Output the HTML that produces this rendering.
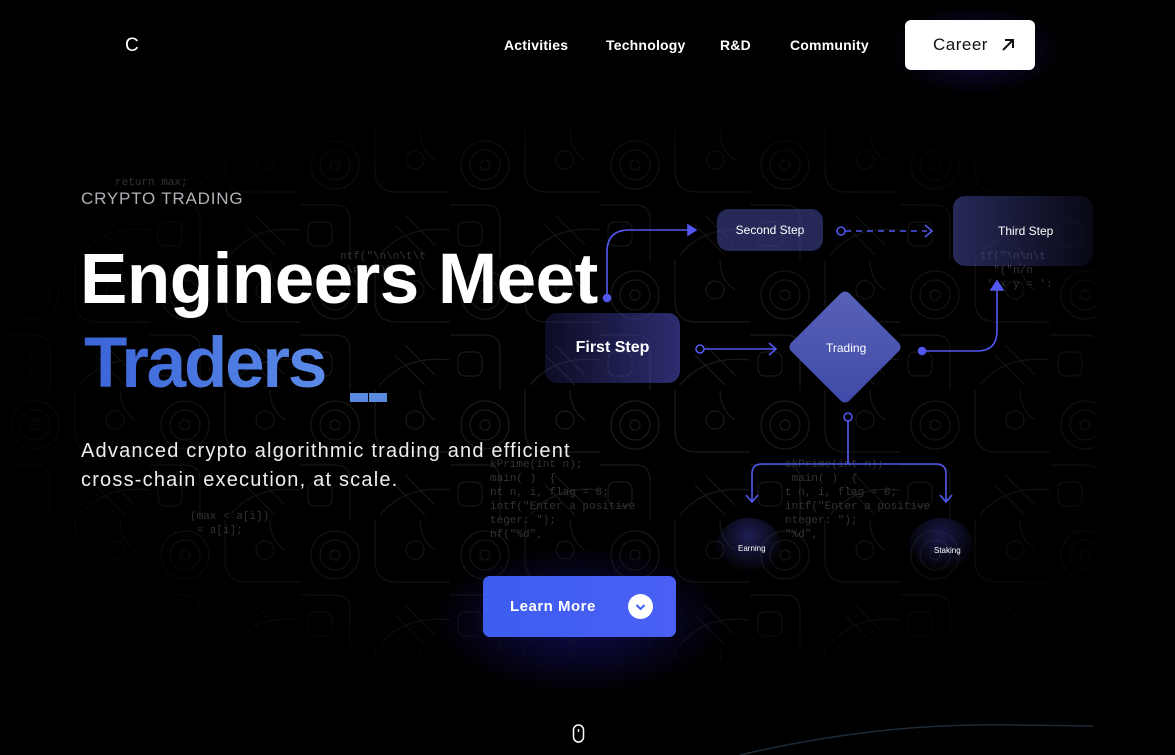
<!DOCTYPE html>
<html><head><meta charset="utf-8"><style>
*{margin:0;padding:0;box-sizing:border-box}
body{width:1175px;height:755px;background:#000;overflow:hidden;position:relative;font-family:"Liberation Sans",sans-serif;color:#fff}
.abs{position:absolute}
.nav a{position:absolute;top:37px;font-size:14px;font-weight:bold;color:#fff;text-decoration:none;letter-spacing:.2px}
.box{position:absolute;border-radius:12px;display:flex;align-items:center;justify-content:center;color:#fff}
.code{position:absolute;font-family:"Liberation Mono",monospace;font-size:11px;color:#33333a;line-height:14px;white-space:pre}
</style></head><body>
<div class="abs" style="left:880px;top:0;width:190px;height:100px;background:radial-gradient(ellipse at center,rgba(40,30,160,.4),transparent 65%)"></div>
<div class="abs" style="left:420px;top:540px;width:320px;height:160px;background:radial-gradient(ellipse at center,rgba(40,30,200,.4),transparent 65%)"></div>
<svg class="abs" style="left:0;top:130px" width="1095" height="530">
<defs>
<pattern id="p" width="150" height="130" patternUnits="userSpaceOnUse">
<g fill="none" stroke="#1d1d20" stroke-width="1.2">
<circle cx="35" cy="35" r="24"/><circle cx="35" cy="35" r="15"/><circle cx="35" cy="35" r="5"/>
<path d="M75 0v40q0 22 22 22h53M0 75h35q15 0 15 15v40M95 95l30 30M105 85l30 30M80 125q25-30 70-25M120 0q0 20 15 30"/>
<circle cx="115" cy="30" r="9"/><rect x="8" y="92" width="24" height="24" rx="7"/>
</g></pattern>
<radialGradient id="g" cx="55%" cy="50%" r="60%"><stop offset="0" stop-color="#fff"/><stop offset=".7" stop-color="#fff" stop-opacity=".6"/><stop offset="1" stop-color="#fff" stop-opacity="0"/></radialGradient>
<mask id="m"><rect width="1095" height="530" fill="url(#g)"/></mask>
</defs>
<rect width="1095" height="530" fill="url(#p)" mask="url(#m)"/>
</svg>
<div class="code" style="left:115px;top:176px">return max;</div>
<div class="code" style="left:340px;top:250px">ntf("\n\n\t\t
n\n\n")"</div>
<div class="code" style="left:490px;top:458px">kPrime(int n);
main( )  {
nt n, i, flag = 0;
intf("Enter a positive
teger: ");
nf("%d",</div>
<div class="code" style="left:785px;top:458px">ckPrime(int n);
 main( )  {
t n, i, flag = 0;
intf("Enter a positive
nteger: ");
"%d",</div>
<div class="code" style="left:190px;top:510px">(max &lt; a[i])
 = a[i];</div>
<div class="code" style="left:980px;top:250px">tf("\n\n\t
  "("n/n
 ' x y = ':</div>

<div class="abs" style="left:125px;top:35px;font-size:19px">C</div>
<div class="nav"><a style="left:504px">Activities</a><a style="left:606px">Technology</a><a style="left:720px">R&amp;D</a><a style="left:790px">Community</a></div>
<div class="abs" style="left:905px;top:20px;width:130px;height:50px;background:#fff;border-radius:6px;color:#111;font-size:17px;display:flex;align-items:center;padding-left:28px;letter-spacing:.5px">Career
<svg style="margin-left:13px" width="14" height="14" viewBox="0 0 14 14"><path d="M2 12L12 2M4 2h8v8" stroke="#111" stroke-width="2" fill="none"/></svg></div>

<div class="abs" style="left:81px;top:189px;font-size:17px;color:#b0b0b8;letter-spacing:.8px">CRYPTO TRADING</div>
<div class="abs" style="left:80px;top:238px;font-size:71px;font-weight:bold;letter-spacing:-0.5px;line-height:84px">Engineers Meet</div>
<div class="abs" style="left:84px;top:322px;font-size:71px;font-weight:bold;letter-spacing:-2.2px;line-height:84px;background:linear-gradient(90deg,#3b64d8,#5a8ae8);-webkit-background-clip:text;color:transparent">Traders</div>
<div class="abs" style="left:350px;top:393px;width:18px;height:9px;background:#5a8ae0"></div>
<div class="abs" style="left:369px;top:393px;width:18px;height:9px;background:#5a8ae0"></div>
<div class="abs" style="left:81px;top:437px;font-size:20px;line-height:29px;letter-spacing:1.2px;color:#eee">Advanced crypto algorithmic trading and efficient<br>cross-chain execution, at scale.</div>

<div class="box" style="left:545px;top:313px;width:135px;height:70px;background:linear-gradient(90deg,rgba(40,40,120,.3),rgba(60,60,150,.75));font-weight:bold;font-size:16px">First Step</div>
<div class="box" style="left:717px;top:209px;width:106px;height:42px;background:rgba(70,75,160,.55);font-size:12px">Second Step</div>
<div class="box" style="left:953px;top:196px;width:140px;height:70px;background:linear-gradient(90deg,rgba(70,75,160,.55),rgba(40,40,100,.2));font-size:12px;justify-content:flex-start;padding-left:45px">Third Step</div>
<div class="abs" style="left:804px;top:306px;width:82px;height:82px;transform:rotate(45deg);background:linear-gradient(135deg,#5862b8,#3f4aa8);border-radius:6px"></div>
<div class="abs" style="left:826px;top:341px;font-size:12px">Trading</div>
<div class="abs" style="left:716px;top:518px;width:66px;height:60px;border-radius:50%;background:radial-gradient(circle at 50% 30%,rgba(50,50,140,.6),transparent 70%)"></div>
<div class="abs" style="left:738px;top:544px;font-size:8px">Earning</div>
<div class="abs" style="left:908px;top:518px;width:66px;height:60px;border-radius:50%;background:radial-gradient(circle at 50% 30%,rgba(50,50,140,.5),transparent 70%)"></div>
<div class="abs" style="left:934px;top:546px;font-size:8px">Staking</div>

<svg class="abs" style="left:0;top:0" width="1175" height="755" fill="none" stroke="#5257f0" stroke-width="1.6">
<path d="M607 298V252q0-22 22-22h60"/><path d="M688 225l8 5-8 5z" fill="#5257f0"/>
<circle cx="607" cy="298" r="3.5" fill="#5257f0"/>
<circle cx="841" cy="231" r="4"/><path d="M845 231h82" stroke-dasharray="6 5"/><path d="M925 225l7 6-7 6"/>
<circle cx="700" cy="349" r="4"/><path d="M704 349h72M769 343l7 6-7 6"/>
<circle cx="922" cy="351" r="3.5" fill="#5257f0"/><path d="M922 351h55q20 0 20-20V288"/><path d="M991 290l6-9 6 9z" fill="#5257f0"/>
<circle cx="848" cy="417" r="4"/><path d="M848 421v43M762 464h174q10 0 10 10v28M762 464q-10 0-10 10v28M746 495l6 7 6-7M940 495l6 7 6-7"/>
</svg>

<div class="abs" style="left:483px;top:576px;width:193px;height:61px;border-radius:7px;background:linear-gradient(90deg,#3d5ef0,#4a5ff5);display:flex;align-items:center;padding-left:27px;font-size:15px;font-weight:bold;letter-spacing:.5px">Learn More
<div style="position:absolute;left:145px;top:18px;width:25px;height:25px;border-radius:50%;background:#fff"><svg width="25" height="25"><path d="M8.5 11l4 4 4-4" stroke="#3d5ef0" stroke-width="2" fill="none"/></svg></div></div>

<svg class="abs" style="left:570px;top:722px" width="20" height="24"><rect x="3.5" y="3" width="10" height="17" rx="5" stroke="#fff" stroke-width="1.5" fill="none"/><path d="M8.5 7v3" stroke="#fff" stroke-width="1.4"/></svg>
<svg class="abs" style="left:0;top:700px" width="1175" height="55"><path d="M740 55Q880 22 1015 25L1093 26" stroke="#1e2a34" stroke-width="1.5" fill="none"/><path d="M0 754h1175" stroke="#2a3a44" stroke-width="2"/></svg>
</body></html>
